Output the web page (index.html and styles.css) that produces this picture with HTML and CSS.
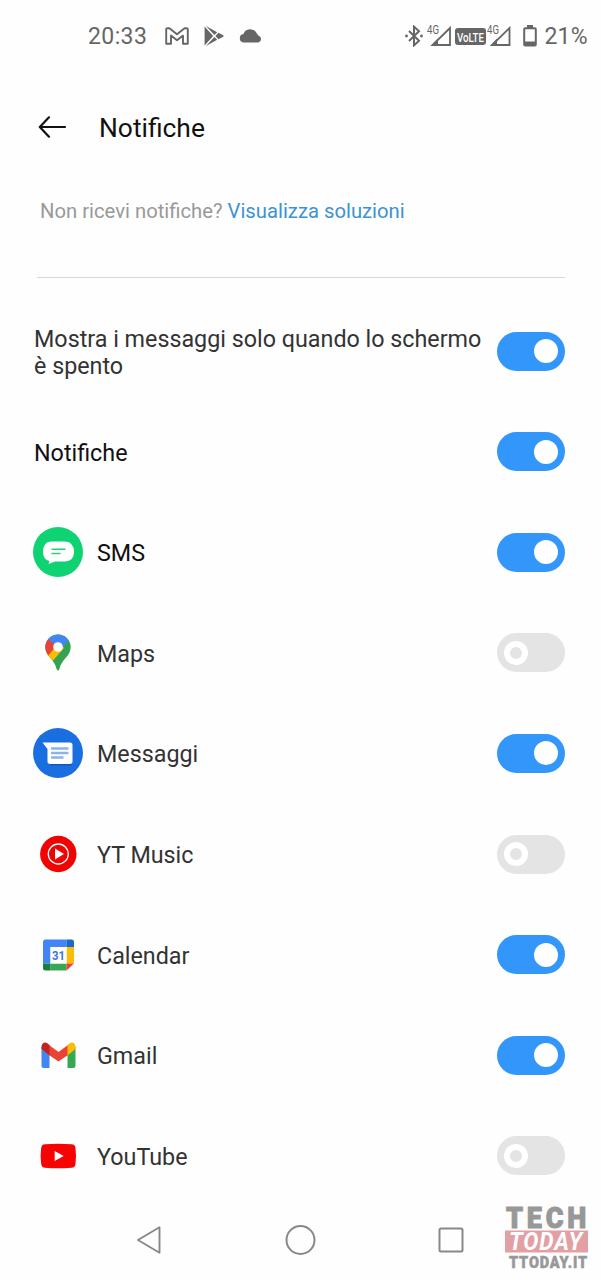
FILE: index.html
```html
<!DOCTYPE html>
<html lang="it">
<head>
    <meta charset="UTF-8">
    <meta name="viewport" content="width=device-width, initial-scale=1.0">
    <title>Notifiche</title>
    <link rel="stylesheet" href="styles.css">
</head>
<body>
    <div class="screen">
        <!-- Barra di stato -->
        <div class="status-bar">
            <span class="clock">20:33</span>
            <svg class="st-gmail" width="24" height="18" viewBox="0 0 24 18">
                <path d="M1.2 16.8V2.2Q1.2 1.2 2.4 1.2H4.4L12 7.2L19.6 1.2H21.6Q22.8 1.2 22.8 2.2V16.8H18V8.6L12 13.2L6 8.6V16.8Z" fill="none" stroke="#666" stroke-width="1.9" stroke-linejoin="round"/>
            </svg>
            <svg class="st-play" width="20" height="20" viewBox="0 0 20 20">
                <path d="M.6.6L9.2 10L.6 19.4ZM2 0L13.2 6.2L10.4 9ZM2 20L13.2 13.8L10.4 11ZM14.4 6.8L19.2 9.3Q20 10 19.2 10.7L14.4 13.2L11.4 10Z" fill="#666"/>
            </svg>
            <svg class="st-cloud" width="24" height="14" viewBox="0 0 24 14">
                <path d="M4.5 13.5A4.3 4.3 0 0 1 4.4 5A7.3 7.3 0 0 1 17.7 4.2Q19 6 19.3 6.4A3.7 3.7 0 0 1 19.5 13.5Z" fill="#666"/>
            </svg>

            <div class="status-right">
                <svg width="18" height="22" viewBox="0 0 18 22">
                    <path d="M4 6L14 15.8L9 20.4V1.6L14 6.2L4 16" fill="none" stroke="#666" stroke-width="2"/>
                    <circle cx="1.5" cy="11" r="1.4" fill="#666"/>
                    <circle cx="16.5" cy="11" r="1.4" fill="#666"/>
                </svg>
                <svg class="signal" width="25" height="24" viewBox="0 0 25 24">
                    <text class="net" x="0" y="10" textLength="12" lengthAdjust="spacingAndGlyphs">4G</text>
                    <path d="M23 4V21H5.5Z" fill="none" stroke="#666" stroke-width="1.8"/>
                    <path d="M11 14.5V21.5H4Z" fill="#666"/>
                </svg>
                <svg class="volte" width="31" height="17" viewBox="0 0 31 17">
                    <rect width="31" height="17" rx="3" fill="#666"/>
                    <text x="2" y="13.500" textLength="27" lengthAdjust="spacingAndGlyphs">VoLTE</text>
                </svg>
                <svg class="signal-2" width="25" height="24" viewBox="0 0 25 24">
                    <text class="net" x="1" y="10" textLength="12" lengthAdjust="spacingAndGlyphs">4G</text>
                    <path d="M23.5 4V21H6Z" fill="none" stroke="#666" stroke-width="1.8"/>
                    <path d="M11 14.5V21.5H4.5Z" fill="#666"/>
                </svg>
                <svg class="battery" width="14" height="22" viewBox="0 0 14 22">
                    <path d="M4 0H10V3H4Z" fill="#666"/>
                    <rect x="1.2" y="3.2" width="11.6" height="17.3" rx="1" fill="none" stroke="#666" stroke-width="2"/>
                    <path d="M1 16.500H13V21H1Z" fill="#666"/>
                </svg>
                <span class="percent">21%</span>
            </div>
        </div>

        <header class="header">
            <svg width="29" height="22" viewBox="0 0 29 22">
                <path d="M11 1.3L1.8 11L11 20.7M1.8 11H27" fill="none" stroke="#111" stroke-width="2.2" stroke-linecap="round" stroke-linejoin="round"/>
            </svg>
            <h1>Notifiche</h1>
        </header>

        <p class="help">Non ricevi notifiche? <a>Visualizza soluzioni</a></p>
        <div class="divider"></div>

        <!-- Elenco delle impostazioni -->
        <ul class="list">
            <li class="row">
                <span class="label">Mostra i messaggi solo quando lo schermo è spento</span>
                <span class="switch on"></span>
            </li>
            <li class="row">
                <span class="label strong">Notifiche</span>
                <span class="switch on"></span>
            </li>
            <li class="row">
                <svg class="icon" width="50" height="50" viewBox="0 0 50 50">
                    <circle cx="25" cy="25" r="25" fill="#0fd372"/>
                    <path d="M18 14.5H32Q41 15 41 25Q41 34 32 34.5H22L15.5 37L16.5 34Q10 32.5 10 25Q10 15 18 14.5Z" fill="#fff"/>
                    <path d="M18.5 22.3H32.5M18.5 26.5H27.5" stroke="#25d07c" stroke-width="1.5"/>
                </svg>
                <span class="label strong">SMS</span>
                <span class="switch on"></span>
            </li>
            <li class="row">
                <svg class="icon" width="50" height="50" viewBox="0 0 50 50">
                    <clipPath id="pin">
                        <path d="M25 6.500A12.700 12.700 0 0 1 37.700 19.200C37.700 28 28.500 31 26.400 41Q25 44 23.600 41C21.500 31 12.300 28 12.300 19.200A12.700 12.700 0 0 1 25 6.500Z"/>
                    </clipPath>
                    <g clip-path="url(#pin)">
                        <path d="M0 0H50V50H0Z" fill="#34a251"/>
                        <path d="M10 27L25 12L31 20L17 36Z" fill="#fbbc04"/>
                        <path d="M15 10L24 17L14 29L8 26V12Z" fill="#ea4335"/>
                        <path d="M14.5 10.5L22 17L28 21L37 11L32 0H12Z" fill="#4285f4"/>
                    </g>
                    <circle cx="25" cy="19" r="4.8" fill="#fff"/>
                </svg>
                <span class="label">Maps</span>
                <span class="switch"></span>
            </li>
            <li class="row">
                <svg class="icon" width="50" height="50" viewBox="0 0 50 50">
                    <circle cx="25" cy="25" r="25" fill="#1a6fe0"/>
                    <path d="M15.5 35.5L39 34.5V35Q39 37.5 36.5 37.5H18Z" fill="#1558b8"/>
                    <path d="M9.5 14.5H37Q39.5 14.5 39.5 17V33.5Q39.5 36 37 36H17Q14.5 36 14.5 33.5V21Z" fill="#fff"/>
                    <path d="M18 20.5H35.5M18 25H35.5M18 29.5H30.5" stroke="#8ab2ee" stroke-width="2.3"/>
                </svg>
                <span class="label">Messaggi</span>
                <span class="switch on"></span>
            </li>
            <li class="row">
                <svg class="icon" width="50" height="50" viewBox="0 0 50 50">
                    <circle cx="25.3" cy="25" r="18.2" fill="#f00303"/>
                    <circle cx="25.3" cy="25" r="10" fill="none" stroke="#fff" stroke-width="1.3"/>
                    <path d="M22 19.5L31 25L22 30.5Z" fill="#fff"/>
                </svg>
                <span class="label">YT Music</span>
                <span class="switch"></span>
            </li>
            <li class="row">
                <svg class="icon" width="50" height="50" viewBox="0 0 50 50">
                    <path d="M12.5 9.5H33.5V17H17.5V33.5H10V12Q10 9.5 12.5 9.5Z" fill="#4285f4"/>
                    <path d="M33.5 9.5H38.5Q41 9.5 41 12V17H33.5Z" fill="#1967d2"/>
                    <path d="M33.5 17H41V33.5H33.5Z" fill="#fbbc04"/>
                    <path d="M17.5 33.5H33.5V40.5H17.5Z" fill="#34a853"/>
                    <path d="M10 33.5H17.5V40.5H12.5Q10 40.5 10 38Z" fill="#188038"/>
                    <path d="M33.5 33.5H41L33.5 40.5Z" fill="#ea4335"/>
                    <path d="M17.5 17H33.5V33.5H17.5Z" fill="#fff"/>
                    <text class="day" x="19" y="29.500" textLength="13" lengthAdjust="spacingAndGlyphs">31</text>
                </svg>
                <span class="label">Calendar</span>
                <span class="switch on"></span>
            </li>
            <li class="row">
                <svg class="icon" width="50" height="50" viewBox="0 0 50 50">
                    <path d="M8.5 17L16.5 22V38H11Q8.5 38 8.5 35.5Z" fill="#4285f4"/>
                    <path d="M42.5 17L34.5 22V38H40Q42.5 38 42.5 35.5Z" fill="#34a853"/>
                    <path d="M16 15L25.5 22L35 15V25L25.5 31.5L16 25Z" fill="#ea4335"/>
                    <path d="M8.5 19V16.5Q9 12.5 12.5 12.5Q14 12.5 16.5 15V25.5Z" fill="#c5221f"/>
                    <path d="M42.5 19V16.5Q42 12.5 38.5 12.5Q37 12.5 34.5 15V25.5Z" fill="#fbbc04"/>
                </svg>
                <span class="label">Gmail</span>
                <span class="switch on"></span>
            </li>
            <li class="row">
                <svg class="icon" width="50" height="50" viewBox="0 0 50 50">
                    <path d="M12 13.3Q25 12.2 38.5 13.3Q42.2 13.5 42.5 17Q43.5 25 42.5 33Q42.2 36.5 38.5 36.7Q25 37.8 12 36.7Q8.5 36.5 8.2 33Q7 25 8.2 17Q8.5 13.5 12 13.3Z" fill="#f80303"/>
                    <path d="M21.7 20L30.7 25L21.7 30Z" fill="#fff"/>
                </svg>
                <span class="label">YouTube</span>
                <span class="switch"></span>
            </li>
        </ul>

        <!-- Barra di navigazione -->
        <nav class="nav-bar">
            <svg width="30" height="32" viewBox="0 0 30 32">
                <path d="M25.5 3.3V28.7L4 16Z" fill="none" stroke="#888" stroke-width="1.9" stroke-linejoin="round"/>
            </svg>
            <svg width="32" height="32" viewBox="0 0 32 32">
                <circle cx="16.5" cy="16" r="14" fill="none" stroke="#888" stroke-width="2"/>
            </svg>
            <svg width="30" height="32" viewBox="0 0 30 32">
                <rect x="3.5" y="4.5" width="23" height="23" rx="1.5" fill="none" stroke="#888" stroke-width="2"/>
            </svg>
        </nav>

        <div class="watermark">
            <svg width="84" height="64" viewBox="0 0 84 64">
                <text class="wm-tech" x="1" y="22" textLength="84" lengthAdjust="spacingAndGlyphs">TECH</text>
                <rect x="0" y="24.500" width="83" height="22" fill="#e3a0a4"/>
                <text class="wm-today" x="4" y="43.500" textLength="74" lengthAdjust="spacingAndGlyphs">TODAY</text>
                <text class="wm-site" x="4" y="61.500" textLength="79" lengthAdjust="spacingAndGlyphs">TTODAY.IT</text>
            </svg>
        </div>
    </div>
</body>
</html>
```
FILE: styles.css
```css
body {
    margin: 0;
    background-color: #fefefe;
    font-family: Roboto, "Liberation Sans", sans-serif;
}
.screen {
    position: relative;
    display: flex;
    flex-direction: column;
    width: 601px;
    height: 1280px;
    overflow: hidden;
}
.status-bar {
    display: flex;
    align-items: center;
    height: 72px;
    padding: 0 13px 0 88px;
    box-sizing: border-box;
    color: #666;
    font-size: 23px;
}
.clock {
    width: 77px;
    letter-spacing: 0.4px;
}
.st-play {
    margin-left: 15px;
}
.st-cloud {
    margin-left: 15px;
}
.status-right {
    display: flex;
    align-items: center;
    margin-left: auto;
}
.signal {
    margin-left: 4px;
}
.volte {
    margin-left: 3px;
    overflow: visible;
}
.volte text {
    font-size: 13.5px;
    font-weight: 500;
    fill: #fff;
}
.net {
    font-size: 12px;
    fill: #666;
}
.battery {
    margin-left: 12px;
}
.percent {
    margin-left: 7px;
    letter-spacing: 0.3px;
}
.header {
    display: flex;
    align-items: center;
    height: 110px;
    padding-left: 38px;
}
.header h1 {
    margin: 2px 0 0 32px;
    color: #111;
    font-size: 26.4px;
    font-weight: 400;
}
.help {
    height: 95px;
    margin: 0;
    padding-left: 40px;
    color: #999;
    font-size: 20.25px;
    line-height: 58px;
}
.help a {
    color: #3d93d1;
}
.divider {
    height: 1px;
    margin: 0 36px 0 37px;
    background-color: #d8d8d8;
}
.list {
    height: 905px;
    margin: 23px 0 0;
    padding: 0;
    list-style: none;
    display: grid;
    grid-template-rows: repeat(9, 1fr);
}
.row {
    display: flex;
    align-items: center;
    padding: 0 36px 0 33px;
}
.icon {
    flex: none;
    margin-right: 13px;
}
.label {
    flex: 1;
    padding: 3px 12px 0 1px;
    color: #333;
    font-size: 23.3px;
    line-height: 27px;
}
.label.strong {
    color: #111;
}
.switch {
    flex: none;
    display: flex;
    align-items: center;
    width: 68px;
    height: 39px;
    padding: 0 7px;
    box-sizing: border-box;
    border-radius: 20px;
    background-color: #e4e4e4;
}
.switch::before {
    content: "";
    width: 12px;
    height: 12px;
    border: 6px solid #fff;
    border-radius: 50%;
}
.switch.on {
    justify-content: flex-end;
    background-color: #3396fb;
}
.switch.on::before {
    background-color: #fff;
}
.day {
    font-size: 13px;
    font-weight: 700;
    fill: #3c78d8;
}
.nav-bar {
    display: flex;
    justify-content: space-between;
    align-items: center;
    height: 68px;
    padding: 0 135px 0 134px;
}
/* sovrapposta alla schermata */
.watermark {
    position: absolute;
    left: 505px;
    top: 1206px;
}
.watermark svg {
    display: block;
    overflow: visible;
}
.wm-tech {
    font-size: 29px;
    font-weight: 900;
    letter-spacing: 4px;
    fill: #989898;
    stroke: #989898;
    stroke-width: 1;
}
.wm-today {
    font-size: 25px;
    font-weight: 700;
    font-style: italic;
    letter-spacing: 1px;
    fill: #fff;
}
.wm-site {
    font-size: 17px;
    font-weight: 900;
    letter-spacing: 1px;
    fill: #989898;
    stroke: #989898;
    stroke-width: 0.5;
}
```
